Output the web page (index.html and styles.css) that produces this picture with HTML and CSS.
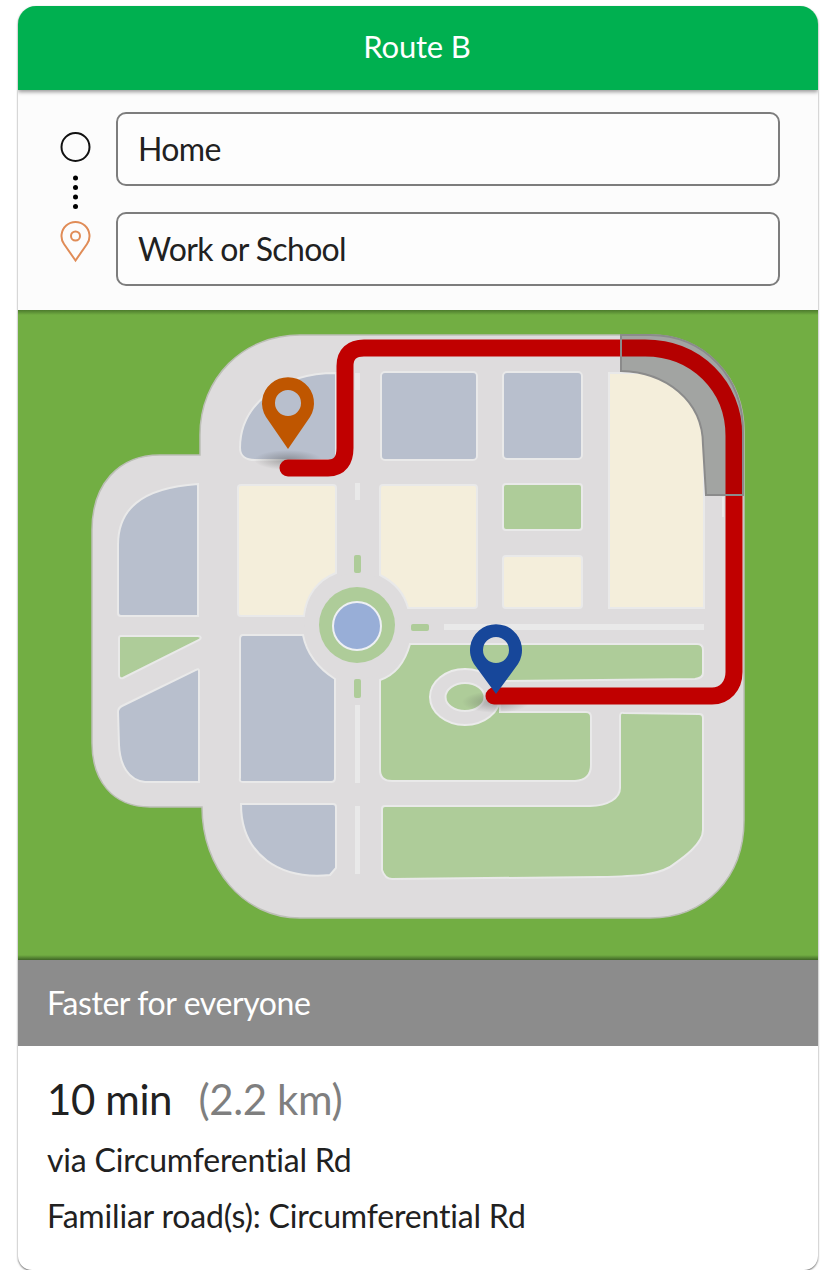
FILE: index.html
```html
<!DOCTYPE html>
<html lang="en">
<head>
    <meta charset="UTF-8">
    <meta name="viewport" content="width=device-width, initial-scale=1.0">
    <title>Route B</title>
    <link rel="stylesheet" href="styles.css">
</head>
<body>

    <div class="route-card">
        <div class="route-title">Route B</div>

        <div class="route-form">
            <div class="route-icons">
                <svg class="trip-icon" width="32" height="136" viewBox="0.5 0 32 136">
                    <circle class="trip-start" cx="16" cy="16" r="14"/>
                    <circle cx="16" cy="47" r="2.5"/>
                    <circle cx="16" cy="56.5" r="2.5"/>
                    <circle cx="16" cy="66" r="2.5"/>
                    <circle cx="16" cy="75.5" r="2.5"/>
                    <path class="trip-end" d="M16 129.5 L4.5 113 A14 14 0 1 1 27.5 113 Z"/>
                    <circle class="trip-end" cx="16" cy="105" r="4.5"/>
                </svg>
            </div>
            <div class="route-fields">
                <div class="route-field">Home</div>
                <div class="route-field">Work or School</div>
            </div>
        </div>

        <div class="route-map">
            <!-- viewBox uses the same numbers as the page so the map is easy to compare -->
            <svg class="map-svg" width="800" height="650" viewBox="18 310 800 650">
                <defs>
                    <radialGradient id="pin-shadow">
                        <stop offset="0" stop-color="#555" stop-opacity="0.45"/>
                        <stop offset="1" stop-color="#555" stop-opacity="0"/>
                    </radialGradient>
                </defs>

                <path class="map-road" d="M300 335 H650 C705 335 744 378 744 432 V820 C744 878 705 918 650 918 H300 C243 918 202 868 202 807 H150 C112 807 92 780 92 743 V530 C92 485 118 455 160 455 H200 V435 C200 378 243 335 300 335 Z"/>

                <path class="block-blue" d="M336 373 V460 H255 C245 460 240 455 240 448 C240 405 280 373 336 373 Z"/>
                <rect class="block-blue" x="381" y="372" width="96" height="88" rx="4"/>
                <rect class="block-blue" x="503" y="372" width="79" height="87" rx="4"/>
                <rect class="block-green" x="503" y="484" width="79" height="46" rx="3"/>
                <rect class="block-cream" x="503" y="556" width="79" height="52" rx="3"/>
                <path class="block-cream" d="M609 373 H640 C680 375 704 405 704 445 V608 H609 Z"/>
                <path class="block-cream" d="M241 485 H333 Q336 485 336 488 V573 C318 580 306 595 304 616 H241 Q238 616 238 613 V488 Q238 485 241 485 Z"/>
                <path class="block-cream" d="M383 485 H474 Q477 485 477 488 V605 Q477 608 474 608 H408 C404 592 394 582 380 575 V488 Q380 485 383 485 Z"/>
                <path class="block-blue" d="M198 484 V616 H121 Q118 616 118 613 V545 C118 510 140 488 198 484 Z"/>
                <path class="block-green" d="M121 636 H198 Q203 637 199 640 L123 678 Q119 679 119 675 V638 Q119 636 121 636 Z"/>
                <path class="block-blue" d="M196 670 Q199 668 199 671 V782 H145 C128 780 120 765 119 745 L118 712 Q118 708 122 706 Z"/>
                <path class="block-blue" d="M243 635 H303 C307 655 318 668 335 679 V778 Q335 782 331 782 H243 Q239 782 240 778 V639 Q240 635 243 635 Z"/>
                <path class="block-blue" d="M241 804 H333 Q336 804 336 807 V868 L330 875 C280 880 241 855 241 804 Z"/>

                <path class="block-green" d="M410 644 H697 Q703 644 703 650 V673 Q703 678 695 679 L500 681 V712 H586 Q591 712 591 717 V765 Q591 780 575 781 H392 C385 781 380 778 380 770 V680 C395 675 405 662 410 644 Z"/>
                <path class="block-green" d="M385 806 H590 C608 806 620 798 620 788 V716 Q620 712 624 713 L699 714 Q703 714 703 718 V830 C703 845 680 860 670 867 C655 875 640 876 600 877 L392 879 Q385 879 382 870 V809 Q382 806 385 806 Z"/>

                <ellipse class="ring-road" cx="465" cy="697" rx="35" ry="28"/>
                <ellipse class="block-green" cx="465" cy="697" rx="19.5" ry="14"/>

                <circle class="map-plaza" cx="357" cy="626" r="53"/>
                <circle class="plaza-ring" cx="357" cy="625" r="38"/>
                <circle class="plaza-pond" cx="357" cy="626" r="24"/>

                <rect class="dash-light" x="355" y="373" width="5" height="17"/>
                <rect class="dash-light" x="355" y="483" width="5" height="17"/>
                <rect class="dash-green" x="354" y="555" width="7" height="18" rx="2"/>
                <rect class="dash-green" x="411" y="624" width="18" height="7" rx="2"/>
                <rect class="dash-light" x="444" y="624" width="260" height="6"/>
                <rect class="dash-green" x="354" y="679" width="7" height="19" rx="2"/>
                <rect class="dash-light" x="355" y="705" width="5" height="78"/>
                <rect class="dash-light" x="355" y="806" width="5" height="68"/>
                <rect class="dash-light" x="722" y="497" width="2" height="20"/>

                <path class="detour-fill" d="M621 335 H650 C705 335 744 378 743 432 V495 H706 C705 480 704 460 703 445 C703 400 665 372 621 371 Z"/>

                <ellipse cx="288" cy="460" rx="34" ry="10" fill="url(#pin-shadow)"/>
                <ellipse cx="496" cy="702" rx="34" ry="11" fill="url(#pin-shadow)"/>

                <path class="route-line" d="M288 468 H328 C340 468 345 460 345 448 V366 C345 354 352 348 364 348 H645 C696 348 734 386 734 436 V672 C734 686 725 696 712 696 H494"/>

                <path class="detour-top" d="M621 335 H650 C705 335 744 378 743 432 V495 H706 C705 480 704 460 703 445 C703 400 665 372 621 371 Z"/>

                <path class="pin-start" fill-rule="evenodd" d="M288 449 L266 417 A26 26 0 1 1 310 417 Z M288 390 A13 13 0 1 0 288 416 A13 13 0 1 0 288 390 Z"/>
                <path class="pin-end" fill-rule="evenodd" d="M496 694 L474 664 A26 26 0 1 1 518 664 Z M496 637 A13 13 0 1 0 496 663 A13 13 0 1 0 496 637 Z"/>
            </svg>
        </div>

        <div class="route-note">Faster for everyone</div>

        <div class="route-info">
            <div class="route-time">10 min <span class="route-dist">(2.2 km)</span></div>
            <div class="route-line-text">via Circumferential Rd</div>
            <div class="route-line-text">Familiar road(s): Circumferential Rd</div>
        </div>
    </div>

</body>
</html>
```

FILE: styles.css
```css
body {
    margin: 0;
    padding: 6px 8px 0 18px;
    background-color: #fff;
    font-family: 'Lato', sans-serif;
    font-variant-ligatures: none;
    color: #212121;
}

.route-card {
    width: 800px;
    height: 1264px;
    display: flex;
    flex-direction: column;
    border-radius: 18px 18px 14px 14px;
    background-color: #fff;
    box-shadow: 0 1px 2px rgba(0, 0, 0, 0.6);
    overflow: hidden;
}

.route-title {
    position: relative;
    z-index: 1;
    height: 84px;
    box-sizing: border-box;
    padding: 0 2px 4px 0;
    display: flex;
    justify-content: center;
    align-items: center;
    background-color: #00b050;
    color: #fff;
    font-size: 31px;
    letter-spacing: -0.2px;
    box-shadow: 0 2px 4px rgba(0, 0, 0, 0.4);
}

.route-form {
    height: 220px;
    display: flex;
    background-color: #fcfcfc;
    box-sizing: border-box;
    padding: 22px 38px 0 42px;
}

.route-icons {
    width: 56px;
    padding-top: 19px;
}

.trip-icon {
    display: block;
    fill: #000;
}

.trip-start {
    fill: none;
    stroke: #111;
    stroke-width: 2;
}

.trip-end {
    fill: none;
    stroke: #e08c57;
    stroke-width: 2;
}

.route-fields {
    flex: 1;
    display: flex;
    flex-direction: column;
    gap: 26px;
}

.route-field {
    height: 74px;
    box-sizing: border-box;
    display: flex;
    align-items: center;
    padding-left: 20px;
    padding-bottom: 2px;
    border: 2px solid #7d7d7d;
    border-radius: 10px;
    background-color: #fdfdfd;
    font-size: 32px;
    letter-spacing: -0.65px;
}

.route-map {
    height: 650px;
    background: linear-gradient(#4c7a2c, #72ae43 5px, #72ae43 645px, #3f6626);
}

.map-svg {
    display: block;
}

.map-road {
    fill: #dedcdd;
    stroke: #bcbfb6;
    stroke-width: 1.5;
}

.map-plaza,
.ring-road {
    fill: #dedcdd;
    stroke: #ebebeb;
    stroke-width: 2;
}

.map-plaza {
    stroke: none;
}

.block-blue,
.block-green,
.block-cream {
    stroke: #e9e9e9;
    stroke-width: 2;
}

.block-blue {
    fill: #b8bfcd;
}

.block-green {
    fill: #aecc99;
}

.block-cream {
    fill: #f4eedb;
}

.plaza-ring {
    fill: #aecc99;
}

.plaza-pond {
    fill: #98aed7;
    stroke: #eef0f4;
    stroke-width: 2;
}

.dash-light {
    fill: #e9e9e9;
}

.dash-green {
    fill: #aecc99;
}

.detour-fill {
    fill: #adafad;
}

.detour-top {
    fill: rgba(0, 0, 0, 0.06);
    stroke: #8b8b8b;
    stroke-width: 2;
}

.route-line {
    fill: none;
    stroke: #c00000;
    stroke-width: 17;
    stroke-linecap: round;
    stroke-linejoin: round;
}

.pin-start {
    fill: #bf5600;
}

.pin-end {
    fill: #17479a;
}

.route-note {
    height: 86px;
    box-sizing: border-box;
    padding-left: 29px;
    padding-bottom: 2px;
    display: flex;
    align-items: center;
    background-color: #8c8c8c;
    color: #fff;
    font-size: 32px;
    letter-spacing: -0.4px;
}

.route-info {
    flex: 1;
    padding: 26px 29px 0;
}

.route-time {
    font-size: 42px;
    line-height: 54px;
    letter-spacing: -0.4px;
}

.route-dist {
    margin-left: 16px;
    color: #7f7f7f;
}

.route-line-text {
    font-size: 32px;
    line-height: 36px;
    letter-spacing: -0.18px;
    margin-top: 20px;
}

.route-time + .route-line-text {
    margin-top: 16px;
}
```
